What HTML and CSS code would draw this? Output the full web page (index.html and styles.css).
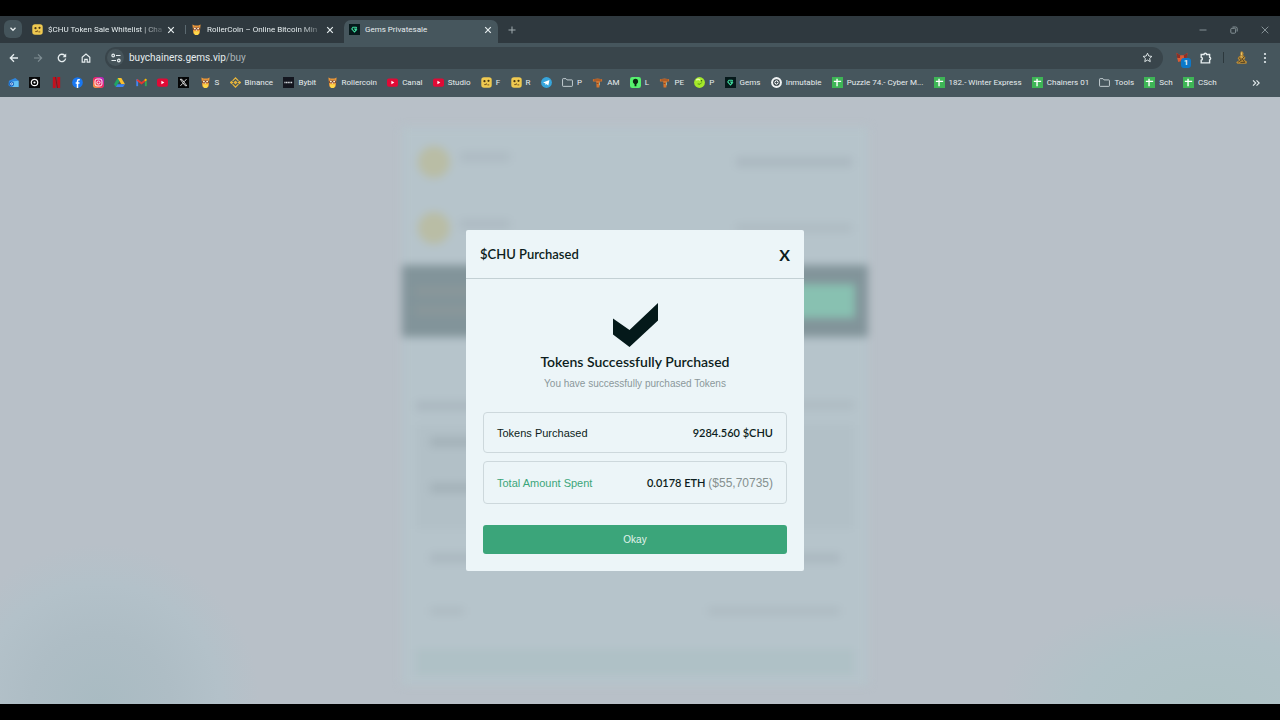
FILE: index.html
```html
<!DOCTYPE html>
<html lang="en">
<head>
<meta charset="utf-8">
<title>Gems Privatesale</title>
<link rel="stylesheet" href="styles.css">
</head>
<body>
<svg class="defs" aria-hidden="true">
  <symbol id="chu" viewBox="0 0 12 12"><rect x=".3" y=".3" width="11.400" height="11.400" rx="3" fill="#efc950"/><circle cx="3.800" cy="4.500" r="1.200" fill="#4b3715"/><circle cx="8.200" cy="4.200" r="1.200" fill="#4b3715"/><path d="M3.500 8.300h2.300V6.800M7 8.600h2" stroke="#6b4a1a" fill="none"/></symbol>
  <symbol id="roller" viewBox="0 0 12 12"><path d="M1.500.5 4 1.500h4L10.500.5 10 5l-.5 5L7.500 12h-3L2.500 10 2 5z" fill="#e8963a"/><path d="M2 5 4 3l2 1 2-1 2 2-.6 1.600H2.600z" fill="#7a3b22"/><circle cx="4.200" cy="5" r="1.100" fill="#fff0c8"/><circle cx="7.800" cy="5" r="1.100" fill="#fff0c8"/><path d="M3 8h6l-.5 2.500L7.200 12H4.800L3.500 10.500z" fill="#ffd94a"/><path d="m5.200 6 .8 1.500L6.800 6z" fill="#fff"/></symbol>
  <symbol id="gem" viewBox="0 0 12 12"><path fill="#06191b" d="M0 0h12v12H0z"/><path d="M8.500 5.500H6.200L7 6.600h1L6 8.700 3 5.300l1.300-1.700h3.400l.8.900" fill="none" stroke="#41e0a2" stroke-width="1.100"/></symbol>
  <symbol id="yt" viewBox="0 0 12 12"><rect y="1.500" width="12" height="9" rx="2" fill="#e00a36"/><path d="m4.800 4 3.200 2-3.200 2z" fill="#fff"/></symbol>
  <symbol id="sheet" viewBox="0 0 12 12"><path fill="#3eb556" d="M0 0h12v12H0z"/><path d="M5.500 2v8M2 4.800h8" stroke="#fff" stroke-width="1.500"/></symbol>
  <symbol id="folder" viewBox="0 0 12 12"><path d="M.6 2.500q0-.7.700-.7h3l1.200 1.400h5.200q.7 0 .7.700v5.600q0 .7-.7.700H1.300q-.7 0-.7-.7z" fill="none" stroke="#cdd6da"/></symbol>
  <symbol id="tee" viewBox="0 0 12 12"><path d="M1 2.500 6 1.500l5 1v2.300L8.600 5 8 11.500H5L4.600 5H3L1 4.800z" fill="#d4742f"/><path d="M2 3.300h8M5 7h2" stroke="#6b3820" stroke-width=".8"/><path d="M8.200 6v3" stroke="#83d0d5" stroke-width=".8"/></symbol>
  <symbol id="close" viewBox="0 0 8 8"><path d="m1.200 1.200 5.600 5.600M6.800 1.200 1.200 6.800" stroke="currentColor" stroke-width="1.200"/></symbol>
</svg>

<div class="browser">
  <header>
    <div class="tabstrip">
      <button class="tab-search" aria-label="Search tabs"><svg viewBox="0 0 8 8" width="8" height="8"><path d="m1.500 2.800 2.500 2.500 2.500-2.500" fill="none" stroke="currentColor" stroke-width="1.300"/></svg></button>
      <div class="tab first"><svg class="fav"><use href="#chu"/></svg><span class="tab-title fade">$CHU Token Sale Whitelist | Cha</span><button aria-label="Close tab"><svg class="x"><use href="#close"/></svg></button></div>
      <div class="tab second"><svg class="fav"><use href="#roller"/></svg><span class="tab-title fade">RollerCoin – Online Bitcoin Min</span><button aria-label="Close tab"><svg class="x"><use href="#close"/></svg></button></div>
      <div class="tab active"><svg class="fav"><use href="#gem"/></svg><span class="tab-title">Gems Privatesale</span><button aria-label="Close tab"><svg class="x"><use href="#close"/></svg></button></div>
      <button class="new-tab" aria-label="New tab"><svg viewBox="0 0 8 8" width="8" height="8"><path d="M4 .5v7M.5 4h7" stroke="currentColor"/></svg></button>
      <div class="window-controls">
        <button aria-label="Minimize"><svg viewBox="0 0 8 8" width="8" height="8"><path d="M.5 4h7" stroke="currentColor"/></svg></button>
        <button aria-label="Restore"><svg viewBox="0 0 8 8" width="8" height="8" fill="none" stroke="currentColor"><rect x=".8" y="2.300" width="4.800" height="4.900" rx="1"/><path d="M2.500 1h3.200q1.500 0 1.500 1.500v3"/></svg></button>
        <button aria-label="Close window"><svg viewBox="0 0 8 8" width="8" height="8"><path d="m.7.7 6.600 6.600M7.300.7.700 7.300" stroke="currentColor"/></svg></button>
      </div>
    </div>

    <div class="toolbar">
      <button aria-label="Back"><svg viewBox="0 0 10 10" width="10" height="10"><path d="M9 5H1.500M5 1.300 1.300 5 5 8.700" fill="none" stroke="currentColor" stroke-width="1.300"/></svg></button>
      <button class="dim" aria-label="Forward"><svg viewBox="0 0 10 10" width="10" height="10"><path d="M1 5h7.500M5 1.300 8.700 5 5 8.700" fill="none" stroke="currentColor" stroke-width="1.100"/></svg></button>
      <button aria-label="Reload"><svg viewBox="0 0 10 10" width="10" height="10"><path d="M8.600 5.500A3.700 3.700 0 1 1 7.700 2.500L8.700 3.500" fill="none" stroke="currentColor" stroke-width="1.300"/><path d="M9.200.6v3.600H5.600z" fill="currentColor"/></svg></button>
      <button aria-label="Home"><svg viewBox="0 0 10 10" width="10" height="10"><path d="M1.200 4.200 5 1.100l3.800 3.100v5H6.200V6.300H3.800v2.900H1.200z" fill="none" stroke="currentColor" stroke-width="1.200"/></svg></button>
      <div class="omnibox">
        <span class="site-info"><svg viewBox="0 0 10 10" width="10" height="10" fill="none" stroke="currentColor" stroke-width="1.200"><circle cx="2.200" cy="2.500" r="1.300"/><path d="M5 2.500h4.500M.5 7.500H5"/><circle cx="7.800" cy="7.500" r="1.300"/></svg></span>
        <span class="url">buychainers.gems.vip<span class="path">/buy</span></span>
        <button aria-label="Bookmark this page"><svg viewBox="0 0 12 12" width="11" height="11"><path d="m6 1.300 1.400 3.100 3.400.4-2.500 2.300.7 3.400L6 8.800l-3 1.700.7-3.400L1.200 4.800l3.400-.4z" fill="none" stroke="currentColor"/></svg></button>
      </div>
      <button class="ext" aria-label="Wallet extension, 1 pending"><svg viewBox="0 0 12 12" width="12" height="12"><path d="m.5.8 3.700 2.400h3.600L11.500.8 10.800 6l-1 4-2.500-.7L6 10.500 4.700 9.300 2.200 10l-1-4z" fill="#dd5b33"/><path d="m.5.8 3.700 2.400L4 6 1.200 6zM11.500.8 7.800 3.200 8 6l2.800 0z" fill="#8d3028"/><path d="M4.500 8h3L6 9.500z" fill="#2d2529"/></svg><span class="badge">1</span></button>
      <button aria-label="Extensions"><svg viewBox="0 0 12 12" width="12" height="12"><path d="M1.200 2.500H4a1.300 1.300 0 0 1 2.600 0h3V5.200a1.400 1.400 0 0 1 0 2.700v3H1.200V8.300a1.600 1.600 0 0 0 0-3.100z" fill="none" stroke="currentColor" stroke-width="1.400"/></svg></button>
      <span class="divider"></span>
      <button class="profile" aria-label="Profile"><svg viewBox="0 0 12 12" width="13" height="13"><path d="M5.500.3 7.300.8 8 2.500 7.300 4l2 .8.200 1.700L8.500 8l2.700 2-.7 1.700H2.200L1 10.300 3.800 8.500 2.500 7 3 5.500l2-1.200L4.800 2z" fill="#b98a35"/><path d="m3.500 6 2.500 2.300L3 10.300M9 5 6.500 7 9 10.500H5" stroke="#41351f" stroke-width=".8" fill="none"/><path d="M6 1.300v2.500M5.500 4.800 7 6.500" stroke="#efcf73" stroke-width=".8"/></svg></button>
      <button class="menu" aria-label="Menu"><svg viewBox="0 0 4 12" width="4" height="12" fill="currentColor"><circle cx="2" cy="2" r="1.100"/><circle cx="2" cy="6" r="1.100"/><circle cx="2" cy="10" r="1.100"/></svg></button>
    </div>

    <nav class="bookmarks" aria-label="Bookmarks">
      <div class="marks">
        <a href="#" aria-label="Outlook"><svg viewBox="0 0 12 12"><path d="m1 4 7-3 3.500 3v7H3L.5 9z" fill="#2f86df"/><path d="m4 5 7.500-1v7H5z" fill="#64c1f5"/><circle cx="4" cy="7.500" r="2.600" fill="#0e58b8"/><circle cx="4" cy="7.500" r="1.200" fill="none" stroke="#fff" stroke-width=".8"/></svg></a>
        <a href="#" aria-label="Studio app"><svg viewBox="0 0 12 12"><path fill="#08090a" d="M0 0h12v12H0z"/><circle cx="6" cy="6" r="3.500" fill="none" stroke="#fff" stroke-width="1.300"/><circle cx="6" cy="6" r="1.200" fill="#fff"/></svg></a>
        <a href="#" aria-label="Netflix"><svg viewBox="0 0 12 12"><path d="M2 0h3.200v12H2zM6.800 0H10v12H6.800z" fill="#c4101d"/><path d="M4.500 0h1l2 12h-1z" fill="#8c0b16"/></svg></a>
        <a href="#" aria-label="Facebook"><svg viewBox="0 0 12 12"><circle cx="6" cy="6" r="5.800" fill="#1877f2"/><path d="M8.500 3H7.300Q6 3 6 4.500V12M4 6.500h4.200" fill="none" stroke="#fff" stroke-width="1.600"/></svg></a>
        <a href="#" aria-label="Instagram"><svg viewBox="0 0 12 12"><defs><linearGradient id="ig" x1="0" y1="1" x2="1" y2="0"><stop stop-color="#fdb53b"/><stop offset=".5" stop-color="#ef2564"/><stop offset="1" stop-color="#a52bdb"/></linearGradient></defs><rect width="12" height="12" rx="3" fill="url(#ig)"/><rect x="2.200" y="2.200" width="7.600" height="7.600" rx="2.200" fill="none" stroke="#fff"/><circle cx="6" cy="6" r="1.700" fill="none" stroke="#fff"/></svg></a>
        <a href="#" aria-label="Drive"><svg viewBox="0 0 12 12"><path d="M4 1h4L4 8 2 11 0 7.800z" fill="#21a464"/><path d="M4 1h4l4 6.800H8z" fill="#fbc02d"/><path d="M3.800 7.800H12L10 11H2z" fill="#3d83f0"/></svg></a>
        <a href="#" aria-label="Gmail"><svg viewBox="0 0 12 12"><path d="M1.300 10V2.500" stroke="#4285f4" stroke-width="2"/><path d="M10.700 10V2.500" stroke="#34a853" stroke-width="2"/><path d="M1 3l5 3.800L11 3" fill="none" stroke="#e5382f" stroke-width="2"/><path d="m9.500 4 1.800-1.500" stroke="#fbbc04" stroke-width="2"/></svg></a>
        <a href="#" aria-label="YouTube"><svg><use href="#yt"/></svg></a>
        <a href="#" aria-label="X"><svg viewBox="0 0 12 12"><path fill="#050607" d="M0 0h12v12H0z"/><path d="M2.500 2.500h1.700l5.300 7H7.800zM9.300 2.300 6.700 5.200M5.200 6.900 2.600 9.700" fill="none" stroke="#fff" stroke-width=".9"/></svg></a>
        <a href="#"><svg><use href="#roller"/></svg>S</a>
        <a href="#"><svg viewBox="0 0 12 12" fill="none" stroke="#e9b53a" stroke-width="1.400"><path d="m2.800 4.200L6 1l3.200 3.200M2.800 7.800 6 11l3.200-3.200M.7 6l1-1 1 1-1 1zM9.300 6l1-1 1 1-1 1zM4.800 6 6 4.800 7.200 6 6 7.200z"/></svg>Binance</a>
        <a href="#"><svg viewBox="0 0 12 12"><path fill="#14161f" d="M0 0h12v12H0z"/><path d="M1.500 6h9" stroke="#d9dde2" stroke-width="1.500" stroke-dasharray="1.300 .5"/></svg>Bybit</a>
        <a href="#"><svg><use href="#roller"/></svg>Rollercoin</a>
        <a href="#"><svg><use href="#yt"/></svg>Canal</a>
        <a href="#"><svg><use href="#yt"/></svg>Studio</a>
        <a href="#"><svg><use href="#chu"/></svg>F</a>
        <a href="#"><svg><use href="#chu"/></svg>R</a>
        <a href="#" aria-label="Telegram"><svg viewBox="0 0 12 12"><circle cx="6" cy="6" r="5.900" fill="#37a5dc"/><path d="m2.200 6 7-2.800L8 9.200 6 7.700 5 8.700l-.3-2z" fill="#fff"/></svg></a>
        <a href="#"><svg><use href="#folder"/></svg>P</a>
        <a href="#"><svg><use href="#tee"/></svg>AM</a>
        <a href="#"><svg viewBox="0 0 12 12"><rect width="12" height="12" rx="2.500" fill="#56f06e"/><path d="M6 2a3 3 0 0 1 1 5.800V10H5V7.800A3 3 0 0 1 6 2z" fill="#0b2812"/></svg>L</a>
        <a href="#"><svg><use href="#tee"/></svg>PE</a>
        <a href="#"><svg viewBox="0 0 12 12"><circle cx="6" cy="6" r="5.900" fill="#a4e82a"/><path d="M2.500 3.500q2-2 4 0" stroke="#e8ffad" stroke-width="1.500" fill="none"/><path d="M4 7.500q3 1.500 4.500-1.500" stroke="#4d8a13" fill="none"/><circle cx="8.200" cy="4" r=".8" fill="#345d12"/></svg>P</a>
        <a href="#"><svg><use href="#gem"/></svg>Gems</a>
        <a href="#"><svg viewBox="0 0 12 12"><circle cx="6" cy="6" r="5.900" fill="#f1f4f5"/><circle cx="6" cy="6" r="3" fill="none" stroke="#2f3c42" stroke-width="1.300"/><path d="M6 4.500v3M4.500 6h3" stroke="#2f3c42" stroke-width=".9"/></svg>Inmutable</a>
        <a href="#"><svg><use href="#sheet"/></svg>Puzzle 74.- Cyber M...</a>
        <a href="#"><svg><use href="#sheet"/></svg>182.- Winter Express</a>
        <a href="#"><svg><use href="#sheet"/></svg>Chainers 01</a>
        <a href="#"><svg><use href="#folder"/></svg>Tools</a>
        <a href="#"><svg><use href="#sheet"/></svg>Sch</a>
        <a href="#"><svg><use href="#sheet"/></svg>CSch</a>
      </div>
      <button class="more" aria-label="More bookmarks"><svg viewBox="0 0 8 8" width="8" height="8" fill="none" stroke="currentColor" stroke-width="1.100"><path d="m1 1.300 2.700 2.700L1 6.700M4.500 1.300 7.200 4 4.500 6.700"/></svg></button>
    </nav>
  </header>

  <main>
    <div class="sale" aria-hidden="true">
      <div class="line"><i class="coin"></i><i class="bar short"></i><i class="bar end"></i></div>
      <div class="line second-line"><i class="coin"></i><i class="bar short"></i><i class="bar end thin"></i></div>
      <div class="promo"><span class="promo-text"><i></i><i></i></span><i class="promo-btn"></i></div>
      <div class="details">
        <div class="detail"><i class="bar"></i><i class="bar thin"></i></div>
        <div class="panel"><div class="detail"><i class="bar dark"></i></div><div class="detail"><i class="bar dark"></i></div></div>
        <div class="detail inset"><i class="bar"></i><i class="bar"></i></div>
        <div class="detail inset last"><i class="bar thin half"></i><i class="bar wide thin"></i></div>
        <div class="submit"></div>
      </div>
    </div>

    <div class="overlay">
      <section class="modal" role="dialog" aria-modal="true" aria-labelledby="modal-title">
        <div class="modal-head"><h1 id="modal-title">$CHU Purchased</h1><button aria-label="Close">X</button></div>
        <div class="modal-body">
          <svg class="check" viewBox="0 0 45 44" width="45" height="44"><path d="M0 15.500 16.500 27 45 0v17.500L16.500 44 0 31.500z" fill="#04191a"/></svg>
          <h2>Tokens Successfully Purchased</h2>
          <p class="note">You have successfully purchased Tokens</p>
          <dl>
            <div class="row"><dt>Tokens Purchased</dt><dd>9284.560 $CHU</dd></div>
            <div class="row total"><dt>Total Amount Spent</dt><dd>0.0178 ETH <span>($55,70735)</span></dd></div>
          </dl>
          <button class="okay">Okay</button>
        </div>
      </section>
    </div>
  </main>
</div>
</body>
</html>
```

FILE: styles.css
```css
* { box-sizing: border-box; }

body {
  margin: 0;
  background: #000;
  font-family: "Liberation Sans", Arial, sans-serif;
}

button {
  display: flex;
  align-items: center;
  justify-content: center;
  border: 0;
  padding: 0;
  background: none;
  color: inherit;
  font: inherit;
  cursor: pointer;
}

h1, h2, p, dl, dd { margin: 0; }
svg { flex: none; }
.defs { position: absolute; width: 0; height: 0; }

.browser {
  display: flex;
  flex-direction: column;
  min-height: 100vh;
  padding: 16px 0;
}

/* Tabs */
header {
  background: #46565d;
  color: #e6edef;
  font-family: Roboto, "Open Sans", sans-serif;
  font-size: 8px;
  line-height: 13px;
}

.tabstrip {
  display: flex;
  align-items: flex-end;
  height: 27px;
  padding-left: 4px;
  background: #2f393f;
}

.tab-search {
  width: 18px;
  height: 18px;
  margin: 0 5px 5px 0;
  border-radius: 6px;
  background: #44545b;
}

.tab {
  display: flex;
  align-items: center;
  gap: 5px;
  width: 158px;
  height: 23px;
  padding: 0 10px 4px 5px;
}

.second { width: 159px; padding-left: 6px; background: linear-gradient(#5c6a71, #5c6a71) 0 5px / 1px 9px no-repeat; }
.active { width: 154px; padding-right: 6px; border-radius: 7px 7px 0 0; background: #46565d; }
.fav { width: 11px; height: 11px; }
.x { width: 8px; height: 8px; }
.tab-title { flex: 1; white-space: nowrap; }
.fade { mask-image: linear-gradient(90deg, #000 80%, #0003); }
.tab button { width: 8px; height: 12px; }
.new-tab { width: 28px; height: 19px; margin-bottom: 4px; color: #a1acb0; }
.window-controls { display: flex; margin-left: auto; padding-bottom: 4px; color: #859196; }
.window-controls button { width: 31px; height: 19px; }

/* Address bar */
.toolbar {
  display: flex;
  align-items: center;
  height: 29px;
  padding: 0 3px 0 2px;
}

.toolbar > button { position: relative; width: 24px; height: 24px; }
.toolbar .dim { color: #819096; }

.omnibox {
  display: flex;
  flex: 1;
  align-items: center;
  gap: 5px;
  height: 22px;
  margin: 0 7px;
  padding: 0 10px 0 2px;
  border-radius: 11px;
  background: #39454b;
}

.site-info {
  display: flex;
  align-items: center;
  justify-content: center;
  width: 17px;
  height: 17px;
  border-radius: 50%;
  background: #46545a;
}

.url { flex: 1; font-size: 10px; }
.path { color: #a9b4b8; }

.badge {
  position: absolute;
  right: 3px;
  bottom: 2px;
  width: 10px;
  border-radius: 3px;
  background: #0d78c8;
  font-weight: 700;
  line-height: 10px;
}

.divider { width: 1px; height: 11px; margin: 0 5px; background: #2c383d; }

/* Bookmarks */
.bookmarks {
  display: flex;
  align-items: center;
  height: 25px;
  padding: 0 12px 4px 8px;
}

.marks {
  display: flex;
  flex: 1;
  justify-content: space-between;
  margin-right: 27px;
}

.marks a {
  display: flex;
  align-items: center;
  gap: 4px;
  color: inherit;
  text-decoration: none;
  white-space: nowrap;
}

.marks svg { width: 11px; height: 11px; }
.more { width: 24px; height: 18px; }

/* Sale page behind the dialog */
main {
  position: relative;
  flex: 1;
  overflow: hidden;
  padding: 30px 10px 14px 0;
  background:
    radial-gradient(circle at 100px 100%, #a9bbc2 0, #aebdc5 70px, #b3c1c9 120px, transparent 160px),
    radial-gradient(ellipse 210px 110px at calc(100% - 70px) 100%, #aec2c5 0, #b1c2c8 60%, transparent),
    #b8c0c8;
}

.sale {
  width: 466px;
  margin: 0 auto;
  background: #b6c4cb;
  filter: blur(4px);
}

.sale i { display: block; }
.line { display: flex; align-items: center; gap: 10px; height: 69px; padding: 0 16px; }
.second-line { height: 64px; margin-bottom: 5px; }
.coin { width: 32px; height: 32px; border-radius: 50%; background: #b9bda5; }
.bar { width: 62px; height: 10px; background: #abb8c0; }
.short { width: 50px; margin-bottom: 9px; background: #aebbc3; }
.end { width: 116px; margin-left: auto; }
.thin { height: 8px; background: #aebbc2; }

.promo {
  display: flex;
  align-items: center;
  justify-content: space-between;
  height: 72px;
  padding: 0 13px;
  background: #82949a;
}

.promo-text i { width: 100px; height: 9px; margin: 10px 0; background: #8a979a; }
.promo-btn { width: 110px; height: 34px; background: #88c1b1; }
.details { padding: 64px 14px 10px; }
.detail { display: flex; justify-content: space-between; height: 16px; }
.panel { margin: 8px 0 24px; padding: 12px 14px 0; background: #b2c0c7; }
.panel .detail { height: 46px; }
.dark { background: #a4b2b9; }
.inset { height: 54px; padding: 0 14px; }
.last { height: 42px; }
.half { width: 34px; }
.wide { width: 132px; }
.submit { height: 26px; background: #afc1c6; }

/* Dialog */
.overlay {
  position: absolute;
  inset: 0;
  display: flex;
  align-items: center;
  justify-content: center;
  padding-right: 10px;
}

.modal {
  width: 338px;
  border-radius: 2px;
  background: #ecf5f8;
  color: #0d1d20;
}

.modal-head {
  display: flex;
  align-items: center;
  justify-content: space-between;
  height: 49px;
  padding: 0 14px;
  border-bottom: 1px solid #c3d0d4;
}

h1, h2, dd, .modal-head button { font-family: Lato, "Noto Sans", sans-serif; }
h1, h2 { font-weight: 600; line-height: 18px; }
h1 { font-size: 13px; }
h2 { font-size: 14px; }
.modal-head button { font-size: 16px; font-weight: 700; }

.modal-body {
  display: flex;
  flex-direction: column;
  padding: 24px 17px 17px;
  text-align: center;
}

.check { align-self: center; margin-bottom: 6px; }
.note { margin: 6px 0 21px; color: #8b989b; font-size: 10px; line-height: 14px; }
dl { display: grid; gap: 8px; margin-bottom: 21px; }

.row {
  display: flex;
  align-items: center;
  justify-content: space-between;
  height: 41px;
  padding: 0 13px;
  border: 1px solid #cdd8dc;
  border-radius: 4px;
  font-size: 11px;
}

.total { height: 43px; }
.total dt { color: #3ba57a; }
dd { font-weight: 600; }
dd span { color: #85908f; font-family: "Liberation Sans", Arial, sans-serif; font-size: 12px; font-weight: 400; }

.okay {
  height: 29px;
  border-radius: 3px;
  background: #3ba57a;
  color: #e2f3ec;
  font-size: 10px;
}
```
